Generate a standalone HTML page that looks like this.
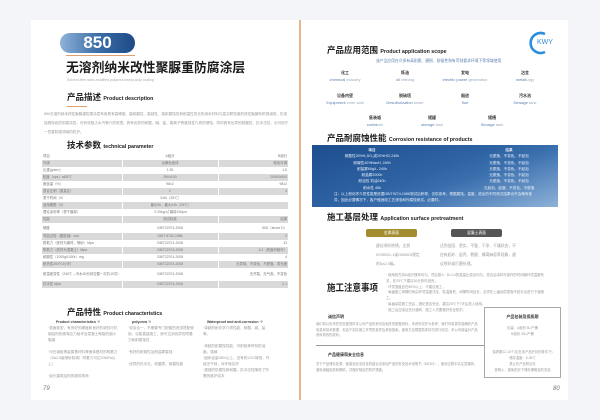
<!DOCTYPE html>
<html><head><meta charset="utf-8">
<style>
*{margin:0;padding:0;box-sizing:border-box}
body{width:600px;height:420px;background:#f3f5f8;position:relative;overflow:hidden;font-family:"Liberation Sans","Noto Sans CJK SC",sans-serif;color:#333}
.a{position:absolute;white-space:nowrap;line-height:1}
.pg{position:absolute;background:#fff}
.h{font-weight:bold;color:#222;font-size:8.5px}
.h small{font-size:5.3px;font-weight:bold}
.t{font-size:3.6px;color:#9a9a9a;line-height:6px}
.tb{position:absolute;left:42px;top:153px;width:246px;border-collapse:collapse;font-size:3.4px;color:#777}
.tb td{height:7px;padding:0 1px;line-height:7px}
.tb tr.g td{background:#d9d9d9}
.tb td:nth-child(2){text-align:center}
.tb td:nth-child(3){text-align:right}
.tb td+td{border-left:1px solid #fff}
.ap{font-size:4px;text-align:center;position:absolute;width:70px;line-height:7px}
.ap b{color:#333;display:block}
.ap span{color:#5a7fb0}
.ap span i{font-style:normal;color:#9ab}
</style></head><body>
<div class="pg" style="left:31px;top:20px;width:269px;height:380px"></div>
<div class="pg" style="left:300px;top:20px;width:268px;height:380px"></div>
<div class="a" style="left:299px;top:20px;width:2px;height:380px;background:#e8b48a"></div>

<!-- left page -->
<div class="a" style="left:60px;top:33px;width:75px;height:20px;border-radius:10px;background:linear-gradient(90deg,#8fb2d8,#3c6ea8 50%,#1d4a86);color:#fff;font-weight:bold;font-size:17px;line-height:20px;text-align:center">850</div>
<div class="a" style="left:66px;top:55px;width:69px;height:1px;background:#e0a070"></div>
<div class="a" style="left:66px;top:62px;font-size:12.8px;font-weight:bold;color:#1a1a1a">无溶剂纳米改性聚脲重防腐涂层</div>
<div class="a" style="left:67px;top:79px;font-size:3.5px;color:#aaa">Solvent-free nano-modified polyurea heavy-duty coating</div>
<div class="a h" style="left:67px;top:93px">产品描述 <small>Product description</small></div>
<div class="a" style="left:67px;top:106px;width:20px;height:1px;background:#e0a070"></div>
<div class="a t" style="left:44px;top:110px;width:246px;white-space:normal;line-height:9px">850无溶剂纳米改性聚脲重防腐涂层采用具有高硬度、高耐磨性、高韧性、高耐腐蚀性和耐温性的无机纳米材料与高交联密度的改性聚脲有机物组成，形成独具特色的防腐涂层，可有效阻止水汽等介质穿透，具有优异的耐酸、碱、盐、氯离子等腐蚀性介质的侵蚀，同时具有优异的耐磨性、抗冲击性，也可用于一些重防腐领域的防护。</div>
<div class="a h" style="left:67px;top:141px">技术参数 <small>technical parameter</small></div>
<table class="tb">
<tr><td style="width:80px">项目</td><td style="width:96px">A组分</td><td>B组分</td></tr>
<tr class="g"><td>外观</td><td>淡黄色液体</td><td>颜色可调</td></tr>
<tr><td>比重(g/cm³)</td><td>1.25</td><td>1.6</td></tr>
<tr class="g"><td>粘度（cps）at25℃</td><td>290±100</td><td>20000±500</td></tr>
<tr><td>固含量（%）</td><td>98±2</td><td>98±2</td></tr>
<tr class="g"><td>混合比例（重量比）</td><td>1</td><td>4</td></tr>
<tr><td>表干时间（h）</td><td colspan="2" style="text-align:center;padding-right:70px">5.6h（25℃）</td></tr>
<tr class="g"><td>适用期限（h）</td><td colspan="2" style="text-align:center;padding-right:70px">最长3h，最大24h（25℃）</td></tr>
<tr><td>理论涂布率（表干膜厚）</td><td colspan="2" style="text-align:center;padding-right:70px">0.25kg/㎡ 膜厚150μm</td></tr>
<tr class="g"><td>性能</td><td>测试标准</td><td>结果</td></tr>
<tr><td style="height:10px">硬度</td><td>GB/T22374-2008</td><td>50D（shore D）</td></tr>
<tr class="g"><td>弯曲试验（圆柱轴）mm</td><td>GB/T 6742-1986</td><td>2</td></tr>
<tr><td>附着力（底材为钢材，喷砂）Mpa</td><td>GB/T22374-2008</td><td>13</td></tr>
<tr class="g"><td>附着力（底材为混凝土）Mpa</td><td>GB/T22374-2008</td><td>3.2（底面材破坏）</td></tr>
<tr><td>耐磨性（1000g/1000r）mg</td><td>GB/T22374-2008</td><td>4</td></tr>
<tr class="g"><td>耐热性250℃4小时</td><td>GB/T22374-2008</td><td>无异味、不变色、不脱落、漆光度</td></tr>
<tr><td style="height:13px;line-height:5px;white-space:normal">耐温差变性（240℃→冷水30分钟交替一次共10次）</td><td>GB/T22374-2008</td><td>无开裂、无气泡、不变色</td></tr>
<tr class="g"><td>抗冲性 Mpa</td><td>GB/T22374-2008</td><td>2.1</td></tr>
</table>
<div class="a h" style="left:67px;top:308px">产品特性 <small>Product characteristics</small></div>
<div class="a" style="left:56px;top:321px;font-size:3.6px;font-weight:bold;color:#444">Product characteristics ※</div>
<div class="a t" style="left:48px;top:325px;width:70px;white-space:normal">·表面致密，有良好的硬度和良好的韧性可抗钢结构的微弯应力破坏及混凝土龟裂的细小裂缝<br><br>·可在钢板等金属基材料等固体基材的附着力（Sa2.5级喷砂除锈）附着力可达20MPa以上）<br><br>·延长建筑结构的服务寿命</div>
<div class="a" style="left:132px;top:321px;font-size:3.6px;font-weight:bold;color:#444">polyurea ※</div>
<div class="a t" style="left:128px;top:325px;width:68px;white-space:normal">·双涂合一，不需要专门配套的底漆搭配使用，也能直接施工，即可达到优异的附着力和耐腐蚀性<br><br>·有好的耐候性及耐盐雾腐蚀<br><br>·优异的抗冲击、耐磨损、耐磨性能</div>
<div class="a" style="left:207px;top:321px;font-size:3.6px;font-weight:bold;color:#444">Waterproof and anti-corrosion ※</div>
<div class="a t" style="left:203px;top:325px;width:68px;white-space:normal">·卓越的耐化学介质性能，耐酸、碱、盐等。<br><br>·卓越的耐腐蚀性能，可耐各种苛刻的油脂、强碱<br>·固体含量98%以上，没有机VOC释放，环保无气味，对环境友好<br>·超强的防腐性和耐磨，抗冲击性降低了所需的维护成本</div>
<div class="a" style="left:43px;top:386px;font-size:6px;color:#777;font-style:italic">79</div>

<!-- right page -->
<svg class="a" style="left:524px;top:30px" width="40" height="26" viewBox="0 0 40 26"><path d="M21 4 A10 10 0 1 0 21 22" fill="none" stroke="#2a8ee0" stroke-width="2.6"/></svg>
<div class="a" style="left:537px;top:39px;font-size:7px;color:#3a8ad8">KWY</div>
<div class="a h" style="left:327px;top:46px">产品应用范围 <small>Product application scope</small></div>
<div class="a" style="left:376px;top:60px;font-size:3.8px;color:#5a7fb0">该产品应用在众多有高耐腐、磨损、耐候性和有苛刻要求环境下等领域使用</div>
<div class="ap" style="left:310px;top:69px"><b>化工</b><span>chemical <i>industry</i></span></div>
<div class="ap" style="left:370px;top:69px"><b>炼油</b><span>oil <i>refining</i></span></div>
<div class="ap" style="left:430px;top:69px"><b>发电</b><span>electric power <i>generation</i></span></div>
<div class="ap" style="left:490px;top:69px"><b>冶金</b><span>metal<i>lurgy</i></span></div>
<div class="ap" style="left:310px;top:92px"><b>设备内壁</b><span>Equipment <i>inner wall</i></span></div>
<div class="ap" style="left:370px;top:92px"><b>脱硫塔</b><span>Desulfurization <i>tower</i></span></div>
<div class="ap" style="left:430px;top:92px"><b>烟道</b><span>flue</span></div>
<div class="ap" style="left:490px;top:92px"><b>污水池</b><span>Sewage <i>tank</i></span></div>
<div class="ap" style="left:340px;top:114px"><b>集装箱</b><span>contai<i>ner</i></span></div>
<div class="ap" style="left:397px;top:114px"><b>储罐</b><span>storage <i>tank</i></span></div>
<div class="ap" style="left:457px;top:114px"><b>储槽</b><span>Storage <i>tank</i></span></div>
<div class="a h" style="left:327px;top:134px">产品耐腐蚀性能 <small>Corrosion resistance of products</small></div>
<div class="a" style="left:312px;top:145px;width:246px;height:62px;background:linear-gradient(160deg,#1d4e8e 0%,#2e63a3 45%,#3a6fae 60%,#8eb2d8 100%);color:#e8f0fa;font-size:3.6px;line-height:6.3px">
<div class="a" style="left:30px;top:2px;width:60px;text-align:center;line-height:6.3px"><b>项目</b><br>耐酸性30%H₂SO₄或20%HCl,240h<br>耐碱性40%NaoH, 240h<br>耐盐雾60g/L, 240h<br>耐盐雾2000h<br>耐油性 机油240h<br>耐水性 48h</div>
<div class="a" style="left:172px;top:2px;width:50px;text-align:center;line-height:6.3px"><b>结果</b><br>无脱落、不变色、不起泡<br>无脱落、不变色、不起泡<br>无脱落、不变色、不起泡<br>无脱落、不变色、不起泡<br>无脱落、不变色、不起泡<br>无起泡、起皱、不变色、不脱落</div>
<div class="a" style="left:22px;top:46px;width:200px;white-space:normal;line-height:6.3px">注：以上耐化学介质性能是依据GB/T9274-1988测试后获得，仅供参考。根据腐蚀、温度、溶出的不同测试结果也许会略有差异，因此必要情况下，客户做适用工艺浸泡和作腐蚀测试，必要时。</div>
</div>
<div class="a h" style="left:327px;top:213px">施工基层处理 <small>Application surface pretreatment</small></div>
<div class="a" style="left:366px;top:229px;width:51px;height:8px;border-radius:2px;background:#a38c2e;color:#fff;font-size:3.8px;line-height:8px;text-align:center">金属表面</div>
<div class="a" style="left:451px;top:229px;width:51px;height:8px;border-radius:2px;background:#555;color:#fff;font-size:3.8px;line-height:8px;text-align:center">混凝土表面</div>
<div class="a t" style="left:376px;top:242px;width:45px;white-space:normal;line-height:9px;font-size:3.8px">建议喷砂除锈，达到ISO8501-1或GB8923规定的Sa2.5级。</div>
<div class="a t" style="left:440px;top:242px;width:78px;white-space:normal;line-height:9px;font-size:3.8px">达到坚固、密实、平整、干净、干燥状态，不应有起砂、起壳、裂缝、蜂窝麻面等现象，建议喷砂或打磨处理。</div>
<div class="a" style="left:327px;top:283px;font-size:8.5px;font-weight:bold;color:#222;transform:scaleY(1.15);transform-origin:top left">施工注意事项</div>
<div class="a t" style="left:386px;top:273px;width:160px;white-space:normal;line-height:5.8px;font-size:3.4px">· 使用前先将A组分搅拌均匀，然后按A：B=1:4的重量比混合均匀，混合后涂料可操作的时间随环境温度有关，在25℃下建议30分钟内用完。<br>· 环境湿度应在85%以上，不建议施工。<br>· 每遍施工间隔时间由环境温度决定，若温度低，间隔时间延长，必须在上遍涂层表面不粘手后进行下道施工。<br>· 每遍涂层施工完后，固化是否完全，建议25℃下7天后投入使用。<br>· 施工后应保证充分通风，施工人员要做好安全防护。</div>
<div class="a" style="left:328px;top:315px;font-size:4px;font-weight:bold;color:#333">诚信声明</div>
<div class="a t" style="left:316px;top:322px;width:164px;white-space:normal;line-height:5.5px;font-size:3.3px">我们将以负责任的态度提供本公司产品的资讯及相关的数据资料，本资料仅作为参考，我们尽量提供准确的产品信息和技术数据，但由于实际施工环境的差异及其他因素，使用方应根据具体情况进行测试，本公司保留对产品资料修改的权利。</div>
<div class="a" style="left:316px;top:345px;width:168px;height:1px;background:#999"></div>
<div class="a" style="left:328px;top:353px;font-size:4px;font-weight:bold;color:#333">产品健康和安全信息</div>
<div class="a t" style="left:316px;top:362px;width:164px;white-space:normal;line-height:5.8px;font-size:3.3px">关于产品储存处置、健康及安全信息的建议请参阅产品的安全技术说明书（MSDS），使用过程中请注意通风，避免接触皮肤和眼睛，并做好相应的防护措施。</div>
<div class="a" style="left:484px;top:307px;width:77px;height:71px;border:1px solid #aaa;background:#fff"></div>
<div class="a" style="left:484px;top:315px;width:77px;text-align:center;font-size:4px;font-weight:bold;color:#333">产品包装及保质期</div>
<div class="a t" style="left:484px;top:325px;width:77px;text-align:center;font-size:3.3px;white-space:normal">包装：A组份 5L/产桶<br>B组份 20L/产桶</div>
<div class="a t" style="left:484px;top:349px;width:77px;text-align:center;font-size:3.3px;white-space:normal">保质期12-18个月(在未产品开封的条件下)<br>储存温度：5-35℃<br>禁止在产品附近存<br>放明火，避免阳光下储存爆晒及防冻结</div>
<div class="a" style="left:553px;top:386px;font-size:6px;color:#777;font-style:italic">80</div>
</body></html>
